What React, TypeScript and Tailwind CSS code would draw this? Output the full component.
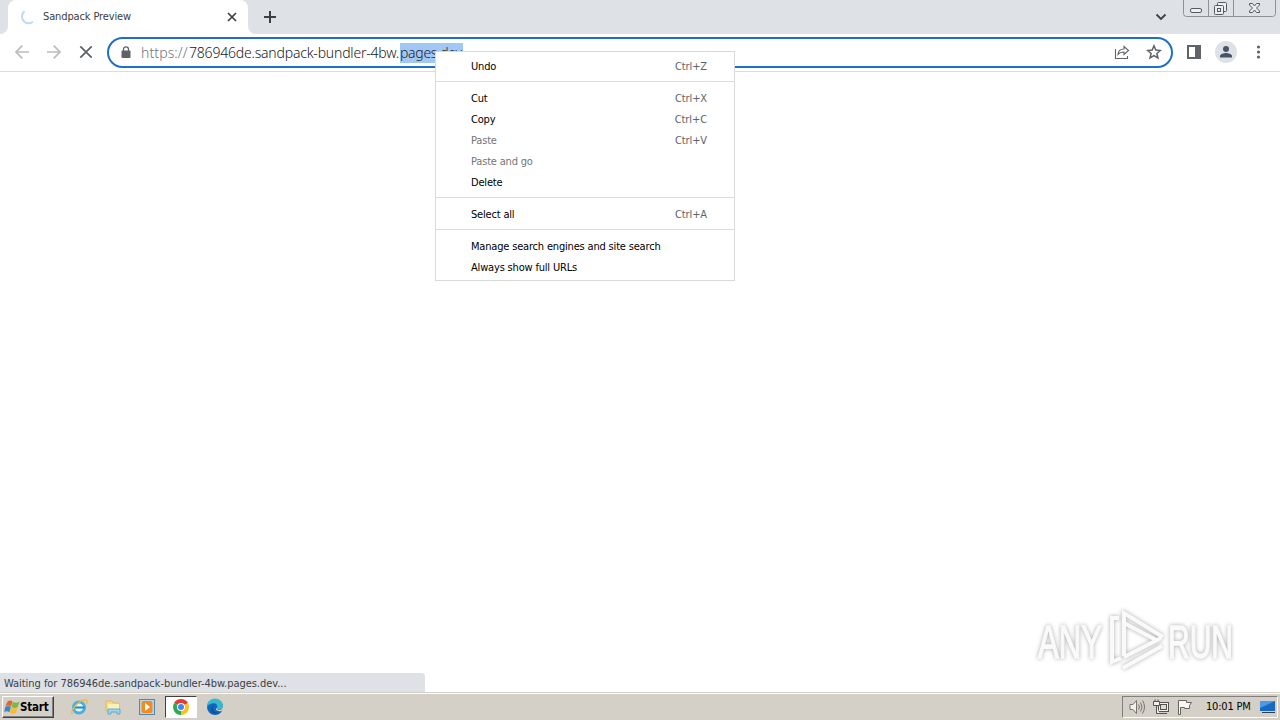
import { clsx } from "clsx";
import type { ReactNode } from "react";

type MenuEntry = {
  label: string;
  shortcut?: string;
  disabled?: boolean;
};

const menuGroups: MenuEntry[][] = [
  [{ label: "Undo", shortcut: "Ctrl+Z" }],
  [
    { label: "Cut", shortcut: "Ctrl+X" },
    { label: "Copy", shortcut: "Ctrl+C" },
    { label: "Paste", shortcut: "Ctrl+V", disabled: true },
    { label: "Paste and go", disabled: true },
    { label: "Delete" },
  ],
  [{ label: "Select all", shortcut: "Ctrl+A" }],
  [{ label: "Manage search engines and site search" }, { label: "Always show full URLs" }],
];

function TabStrip() {
  return (
    <div className="flex h-[34px] bg-[#dee1e6]">
      {/* Active tab */}
      <div className="relative ml-2 flex h-[34px] w-60 items-center rounded-t-lg bg-white pl-3">
        <svg className="absolute bottom-0 -left-2 h-2 w-2" viewBox="0 0 8 8">
          <path d="M8 0v8H0a8 8 0 0 0 8-8Z" fill="#fff" />
        </svg>
        <svg className="absolute -right-2 bottom-0 h-2 w-2" viewBox="0 0 8 8">
          <path d="M0 0v8h8a8 8 0 0 1-8-8Z" fill="#fff" />
        </svg>
        <svg className="h-4 w-4" viewBox="0 0 16 16" fill="none">
          <path d="M4.500 2.300A6.700 6.700 0 1 0 13 12.800" stroke="#c0d7f6" strokeWidth="2" />
        </svg>
        <span className="ml-[7px] w-[180px] pt-px text-[11px] tracking-[-0.13px] text-[#3c4043]">Sandpack Preview</span>
        <svg className="mb-0.5 h-4 w-4 shrink-0" viewBox="0 0 16 16" stroke="#3c4043" strokeWidth="1.7">
          <path d="m5 5 8 8m0-8-8 8" />
        </svg>
      </div>
      <svg className="mt-[9px] ml-3.5 h-4 w-4" viewBox="0 0 16 16" stroke="#3c4043" strokeWidth="2">
        <path d="M8 2v12M2 8h12" />
      </svg>
      <svg className="mt-[9px] ml-auto h-4 w-4" viewBox="0 0 16 16" fill="none" stroke="#3c4043" strokeWidth="1.8">
        <path d="m3.500 5.500 4.500 4.500 4.500-4.500" />
      </svg>
      <WindowButtons />
    </div>
  );
}

function WindowButtons() {
  return (
    <svg className="mr-1 ml-3.5 h-[18px] w-[93px]" viewBox="0 0 93 18" fill="none" stroke="#8d929a">
      <path d="M.5 0v13.500a3 3 0 0 0 3 3h86a3 3 0 0 0 3-3V0M25.500 0v16M50.500 0v16" />
      <g stroke="#555960">
        <rect x="7.500" y="8.500" width="11" height="4" rx="1.500" fill="#eceef1" />
        <rect x="34.500" y="2.500" width="9" height="9" rx="1" fill="#eceef1" />
        <rect x="31.500" y="5.500" width="9" height="9" rx="1" fill="#eceef1" />
        <rect x="34.500" y="8.500" width="3" height="3" />
        <path d="M66.500 3.500h3l2 2.500 2-2.500h3v1.500l-3 3 3 3v1.500h-3l-2-2.500-2 2.500h-3v-1.500l3-3-3-3Z" fill="#eceef1" />
      </g>
    </svg>
  );
}

function Toolbar() {
  return (
    <div className="flex h-[38px] items-center border-b border-[#dadce0] bg-white pl-3.5">
      <svg className="mb-0.5 h-4 w-4" viewBox="0 0 16 16" fill="none" stroke="#babcbe" strokeWidth="1.7">
        <path d="M15 8H2m6.300-6.300L2 8l6.300 6.300" />
      </svg>
      <svg className="mb-0.5 ml-4 h-4 w-4" viewBox="0 0 16 16" fill="none" stroke="#babcbe" strokeWidth="1.7">
        <path d="M1 8h13M7.700 1.700 14 8l-6.300 6.300" />
      </svg>
      <svg className="mb-0.5 ml-4 h-4 w-4" viewBox="0 0 16 16" stroke="#5f6368" strokeWidth="1.8">
        <path d="m2.300 2.300 11.400 11.400m0-11.400L2.300 13.700" />
      </svg>
      <AddressBar />
      <svg className="mb-0.5 ml-3.5 h-3.5 w-3.5" viewBox="0 0 14 14">
        <path fillRule="evenodd" d="M0 0h14v14H0Zm2 2v10h6V2Z" fill="#5f6368" />
      </svg>
      <svg className="mb-0.5 ml-3.5 h-[22px] w-[22px]" viewBox="0 0 22 22" fill="#4a5268">
        <circle cx="11" cy="11" r="11" fill="#dee1e6" />
        <circle cx="11" cy="8" r="3" />
        <path d="M5 16.500V15c0-2 4-3 6-3s6 1 6 3v1.500Z" />
      </svg>
      <svg className="mb-px ml-[13px] h-4 w-4" viewBox="0 0 16 16" fill="#5f6368">
        <circle cx="8.500" cy="3" r="1.600" />
        <circle cx="8.500" cy="8" r="1.600" />
        <circle cx="8.500" cy="13" r="1.600" />
      </svg>
    </div>
  );
}

function AddressBar() {
  return (
    <div className="ml-[13px] flex h-[31px] w-[1066px] items-center rounded-full border-2 border-[#1f6fc9] pl-3">
      <svg className="mb-0.5 h-3 w-2.5" viewBox="0 0 10 12">
        <path d="M2.500 5V3.300a2.500 2.500 0 0 1 5 0V5" fill="none" stroke="#5f6368" strokeWidth="1.300" />
        <rect x="0.500" y="4.500" width="9" height="7.500" rx="1" fill="#5f6368" />
      </svg>
      <div className="ml-2.5 flex font-['Noto_Sans',sans-serif] text-[14px] leading-[20px] whitespace-pre text-[#202124]">
        <span className="w-[48px] tracking-[0.1px] text-[#70757a] font-light">https://</span>
        <span className="w-[211px] tracking-[-0.2px] font-light">786946de.sandpack-bundler-4bw.</span>
        <span className="w-[63px] bg-[#a3c7f5] tracking-[-0.3px] font-light">pages.dev</span>
      </div>
      <svg className="mr-4 mb-px ml-auto h-4 w-4" viewBox="0 0 16 16" fill="none" stroke="#5f6368" strokeWidth="1.100">
        <path d="M1.500 5v9.500h12V12M4 10.500c.3-4 2.500-5.500 6-5.500V2.500l4.500 4-4.500 4V8c-2.500 0-4.500.5-6 2.500Z" />
      </svg>
      <svg className="mr-[9px] mb-px h-4 w-4" viewBox="0 0 16 16" fill="none" stroke="#5f6368" strokeWidth="1.500">
        <path d="m8 1.800 1.800 4.300 4.600.4-3.500 3 1.100 4.500-4-2.400L4 14l1.100-4.500-3.500-3 4.600-.4Z" />
      </svg>
    </div>
  );
}

function ContextMenu() {
  return (
    <div className="absolute top-[51px] left-[435px] h-[230px] w-[300px] border border-[#d8d9db] bg-white pt-1">
      {menuGroups.map((group, index) => (
        <div
          key={index}
          className={clsx(index === 0 ? "pb-1" : "border-t border-[#dadce0] pt-1.5", index > 0 && index < 3 && "pb-1")}
        >
          {group.map((entry) => (
            <div
              key={entry.label}
              className={clsx(
                "flex h-[21px] items-center justify-between pt-0.5 pr-[27px] pl-[35px] text-[11px] whitespace-pre",
                entry.disabled ? "text-[#757575]" : "text-black",
              )}
            >
              <span className="tracking-[-0.18px]">{entry.label}</span>
              {entry.shortcut && <span className="tracking-[-0.1px] text-[#5f6368]">{entry.shortcut}</span>}
            </div>
          ))}
        </div>
      ))}
    </div>
  );
}

function Watermark() {
  return (
    <svg
      className="absolute top-[604px] left-[1028px] h-[72px] w-[216px] drop-shadow-[0_0_2px_#aaa]"
      viewBox="-4 0 216 72"
      fill="none"
      stroke="#fafafa"
      strokeWidth="4"
    >
      <g fill="#fafafa" strokeWidth="1.4" fontFamily="Liberation Sans Narrow, Liberation Sans, sans-serif" fontSize="47">
        <text x="6" y="54" textLength="64" lengthAdjust="spacingAndGlyphs">ANY</text>
        <text x="136" y="54" textLength="65" lengthAdjust="spacingAndGlyphs">RUN</text>
      </g>
      <path d="M87 14h-7v44l9-4M92 52V9l39 24M92 19l34 18M92 53l37-19M91 64l39-22" />
    </svg>
  );
}

function TaskButton({ active, children }: { active?: boolean; children: ReactNode }) {
  return (
    <div
      className={clsx(
        "flex h-[22px] w-8 items-center justify-center border",
        active ? "border-t-[#404040] border-r-white border-b-white border-l-[#404040] bg-white" : "border-transparent",
      )}
    >
      <svg className="h-[18px] w-[18px]" viewBox="0 0 18 18">
        {children}
      </svg>
    </div>
  );
}

function Taskbar() {
  return (
    <div className="flex h-7 items-start border-t border-[#d4d0c8] bg-[#d4d0c8] shadow-[inset_0_1px_0_#fff]">
      <div className="mt-[3px] ml-0.5 flex h-[22px] w-[52px] items-center border border-t-white border-r-[#404040] border-b-[#404040] border-l-white pl-px shadow-[inset_-1px_-1px_0_#808080]">
        <svg className="h-4 w-4 shrink-0" viewBox="0 0 17 16">
          <path d="M4 2q3-2 5 0L7.500 7.500Q4.500 5.500 1.500 7Z" fill="#e8632b" />
          <path d="M9.500 2.500q3 2 7 0l-2 5.500q-3 2-6.500 0Z" fill="#79b843" />
          <path d="M1.300 8q3-2 6 0l-1.500 5.500q-3-2-5.500 0Z" fill="#3f83ca" />
          <path d="M7.800 8.500q3 2 6.500 0l-1.500 5.500q-3 2-6.500 0Z" fill="#f5bd31" />
        </svg>
        <span className="pt-px text-[11.5px] font-bold tracking-[-0.2px] text-black">Start</span>
      </div>
      <div className="mt-[3px] ml-[9px] flex gap-0.5">
        <TaskButton>
          <circle cx="9" cy="9.500" r="5.500" fill="#e2f5fd" stroke="#49afe3" strokeWidth="3" />
          <path d="M5 9.500h9.500" stroke="#2189c5" strokeWidth="2" />
          <path d="M2.500 16C-1 13 10 1 16 2c2 1 1 3 0 4" fill="none" stroke="#e9b93f" strokeWidth="1.300" />
        </TaskButton>
        <TaskButton>
          <path d="M2 3h6l1 2h6v8H2Z" fill="#f6dc84" stroke="#d8bc67" />
          <path d="M4 6h11v5H4Z" fill="#fff1b3" />
          <path d="M4 16v-5h12v5h-3v-2H7v2Z" fill="#9ed5ed" stroke="#5eacd1" />
        </TaskButton>
        <TaskButton>
          <rect x="1.500" y="1.500" width="15" height="15" fill="#b5d4e8" stroke="#5288b2" />
          <rect x="3.500" y="3" width="11" height="12" rx="2" fill="#f58b1f" />
          <path d="m7 5 5 4-5 4Z" fill="#fff" />
        </TaskButton>
        <TaskButton active>
          <path d="M9 9 2.100 5A8 8 0 0 1 15.900 5Z" fill="#e33b2e" />
          <path d="M9 9 15.900 5A8 8 0 0 1 9 17Z" fill="#fbc116" />
          <path d="M9 9v8A8 8 0 0 1 2.100 5Z" fill="#2da94f" />
          <circle cx="9" cy="9" r="4" fill="#fff" />
          <circle cx="9" cy="9" r="3" fill="#4285f4" />
        </TaskButton>
        <TaskButton>
          <circle cx="9" cy="9" r="8" fill="#0c68bd" />
          <path d="M1 9a8 8 0 0 1 16-1c0 5-6 4-6 2 2-6-7-6-10-1Z" fill="#38b8cf" />
          <path d="M11 10c0 3 6 3 6-2v4l-2 1c-3 1-7-2-4-3Z" fill="#d4d0c8" />
          <path d="M8 7.500c-3 4 1 9 7 6.500-3 3-10 3-10-2 0-2 1-4 3-4.500Z" fill="#15509e" />
        </TaskButton>
      </div>
      {/* System tray */}
      <div className="mt-[3px] mr-0.5 ml-auto flex h-[22px] w-[156px] items-center border border-t-[#808080] border-r-white border-b-white border-l-[#808080] pl-1.5">
        <svg className="h-4 w-[17px]" viewBox="0 0 17 16" fill="none" stroke="#77756f">
          <path d="M1 5.500h3l3.500-4v13l-3.500-4H1Z" fill="#f2f0ea" />
          <path d="M9.500 5.500q2 2.500 0 5M11.500 3.500q3 4.500 0 9M13.500 1.500q4 6.500 0 13" />
        </svg>
        <svg className="ml-[7px] h-4 w-4" viewBox="0 0 16 16" fill="none" stroke="#55534f">
          <rect x="5.500" y="3.500" width="10" height="9" fill="#f2f0ea" />
          <rect x="7.500" y="5.500" width="6" height="5" fill="#dedbd3" />
          <path d="M6 14.500h8" />
          <path d="M.5 2.500h6v4h-6ZM3.500 6.500v8h3M2 .5v2m3-2v2" fill="#f2f0ea" />
        </svg>
        <svg className="ml-2 h-4 w-4" viewBox="0 0 16 16" fill="none" stroke="#66645f">
          <path d="M1.500 15.500V1.500h8v2h5l-2 3v3h-5v-1h-4v7Z" fill="#f7f6f2" />
        </svg>
        <span className="ml-[13px] w-[46px] pt-px text-[11px] tracking-[-0.2px] whitespace-nowrap text-black">10:01 PM</span>
        <svg className="ml-2 h-4 w-4 shrink-0" viewBox="0 0 16 16">
          <path d="M0 2h15v10H0Z" fill="#1769c2" />
          <path d="M0 2h15L0 9Z" fill="#4b9ae6" />
          <path d="M2 13h13v1H2Z" fill="#303f55" />
        </svg>
      </div>
    </div>
  );
}

export default function App() {
  return (
    <div className="relative flex h-[720px] w-[1280px] flex-col overflow-hidden bg-white font-['DejaVu_Sans_Condensed','DejaVu_Sans',sans-serif]">
      <TabStrip />
      <Toolbar />
      <main className="flex flex-1 items-end">
        <div className="flex h-[19px] w-[425px] items-center rounded-tr bg-[#dee1e6] pt-[3px] pl-1 text-[11px] tracking-[-0.04px] text-[#3c4043]">
          <span>Waiting for 786946de.sandpack-bundler-4bw.pages.dev...</span>
        </div>
      </main>
      <Taskbar />
      <Watermark />
      <ContextMenu />
    </div>
  );
}
